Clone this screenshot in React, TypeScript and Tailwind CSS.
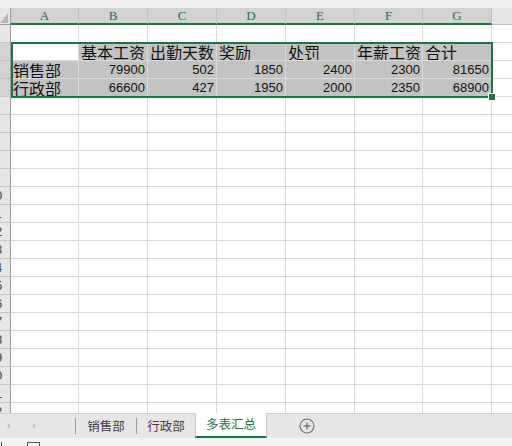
import React from "react";

const colW = [68, 69, 69, 69, 69, 68, 69];
const letters = ["A", "B", "C", "D", "E", "F", "G"];
const data: string[][] = [
  ["", "基本工资", "出勤天数", "奖励", "处罚", "年薪工资", "合计"],
  ["销售部", "79900", "502", "1850", "2400", "2300", "81650"],
  ["行政部", "66600", "427", "1950", "2000", "2350", "68900"],
];

const cjk = { fontFamily: '"Noto Sans CJK SC", sans-serif' };
const num = { fontFamily: '"Liberation Sans", Arial, sans-serif' };

function RowHeader({ n, sel }: { n: number; sel: boolean }) {
  return (
    <div
      className={`w-[11px] shrink-0 h-full overflow-hidden flex justify-end items-center border-r border-b border-r-[#9c9c9c] border-b-[#c6c6c6] ${
        sel ? "bg-[#d2d2d2]" : "bg-[#e6e6e6]"
      }`}
    >
      <span
        className="w-[30px] shrink-0 text-center text-[13px] leading-[17px] text-[#444]"
        style={num}
      >
        {n}
      </span>
    </div>
  );
}

function Row({ n }: { n: number }) {
  const rowData = n >= 2 && n <= 4 ? data[n - 2] : null;
  return (
    <div className="flex h-[18px] shrink-0">
      <RowHeader n={n} sel={!!rowData} />
      {colW.map((w, i) => {
        const v = rowData ? rowData[i] : "";
        const gray = rowData && !(n === 2 && i === 0);
        const isNum = /^\d+$/.test(v);
        return (
          <div
            key={i}
            style={{ width: w }}
            className={`shrink-0 h-full border-r border-b border-[#d9d9d9] flex items-end overflow-hidden whitespace-nowrap ${
              gray ? "bg-[#c3c3c3]" : "bg-white"
            } ${isNum ? "justify-end pr-[2px]" : "pl-[2px]"}`}
          >
            {v && (
              <span
                className={
                  isNum
                    ? "text-[13px] leading-[15px] text-[#111] pb-[1px]"
                    : "text-[16px] leading-[16px] text-[#111]"
                }
                style={isNum ? num : cjk}
              >
                {v}
              </span>
            )}
          </div>
        );
      })}
      <div className="flex-1 h-full border-b border-[#d9d9d9] bg-white" />
    </div>
  );
}

export default function App() {
  const rows = Array.from({ length: 22 }, (_, i) => i + 1);
  return (
    <div className="w-[512px] h-[446px] overflow-hidden bg-white flex flex-col relative">
      <div className="h-[8px] shrink-0 bg-[#efefef]" />
      <div className="flex-1 min-h-0 overflow-hidden relative flex flex-col">
        {/* Header */}
        <div className="flex h-[17px] shrink-0">
          <div className="w-[11px] shrink-0 h-full bg-[#e6e6e6] border-r border-b border-[#9c9c9c] relative overflow-hidden">
            <svg width="11" height="17" className="block">
              <polygon points="0,15 8,15 8,5" fill="#b7b7b7" />
            </svg>
          </div>
          {colW.map((w, i) => (
            <div
              key={i}
              style={{ width: w, fontFamily: '"Liberation Serif", serif' }}
              className="shrink-0 h-full bg-[#d2d2d2] border-r border-r-[#c0c0c0] border-b-2 border-b-[#217346] flex items-center justify-center text-[13px] leading-[15px] text-[#217346]"
            >
              {letters[i]}
            </div>
          ))}
          <div className="flex-1 h-full bg-[#e6e6e6] border-b border-[#c0c0c0]" />
        </div>
        {rows.map((n) => (
          <Row key={n} n={n} />
        ))}
        {/* selection overlay */}
        <div className="absolute left-[11px] top-[34px] w-[482px] h-[56px] border-2 border-[#217346]" />
        <div className="absolute left-[489px] top-[86px] w-[6px] h-[6px] bg-[#217346] outline outline-1 outline-white" />
      </div>
      {/* Tab bar */}
      <div className="h-[25px] shrink-0 bg-[#e6e6e6] border-t border-[#d0d0d0] flex items-stretch relative" style={cjk}>
        <div className="w-[75px] shrink-0 flex items-center">
          <svg width="75" height="24" className="block">
            <polygon points="7,12 10,9 10,15" fill="#c2c2c2" />
            <polygon points="36,12 33,9 33,15" fill="#c2c2c2" />
          </svg>
        </div>
        <div className="w-px bg-[#9a9a9a] my-[4px]" />
        <div className="w-[60px] flex items-center justify-center text-[12.5px] text-[#404040]">销售部</div>
        <div className="w-px bg-[#9a9a9a] my-[4px]" />
        <div className="w-[58px] flex items-center justify-center text-[12.5px] text-[#404040]">行政部</div>
        <div className="w-[72px] -mt-px bg-white border-x border-[#c6c6c6] border-b-2 border-b-[#217346] flex items-center justify-center text-[12.5px] text-[#217346]">
          多表汇总
        </div>
        <div className="flex-1 flex items-center pl-[32px]">
          <svg width="16" height="16" viewBox="0 0 16 16" className="block">
            <circle cx="8" cy="8" r="7" fill="none" stroke="#6e6e6e" strokeWidth="1.1" />
            <line x1="4.5" y1="8" x2="11.5" y2="8" stroke="#6e6e6e" strokeWidth="1.3" />
            <line x1="8" y1="4.5" x2="8" y2="11.5" stroke="#6e6e6e" strokeWidth="1.3" />
          </svg>
        </div>
      </div>
      {/* status bar */}
      <div className="h-[8px] shrink-0 bg-[#f3f3f3] flex items-end">
        <div className="w-[1px] h-[4px] bg-[#555] ml-[1px]" />
        <div className="w-[13px] h-[4px] border-t border-x border-[#555] ml-[25px]" />
      </div>
    </div>
  );
}
